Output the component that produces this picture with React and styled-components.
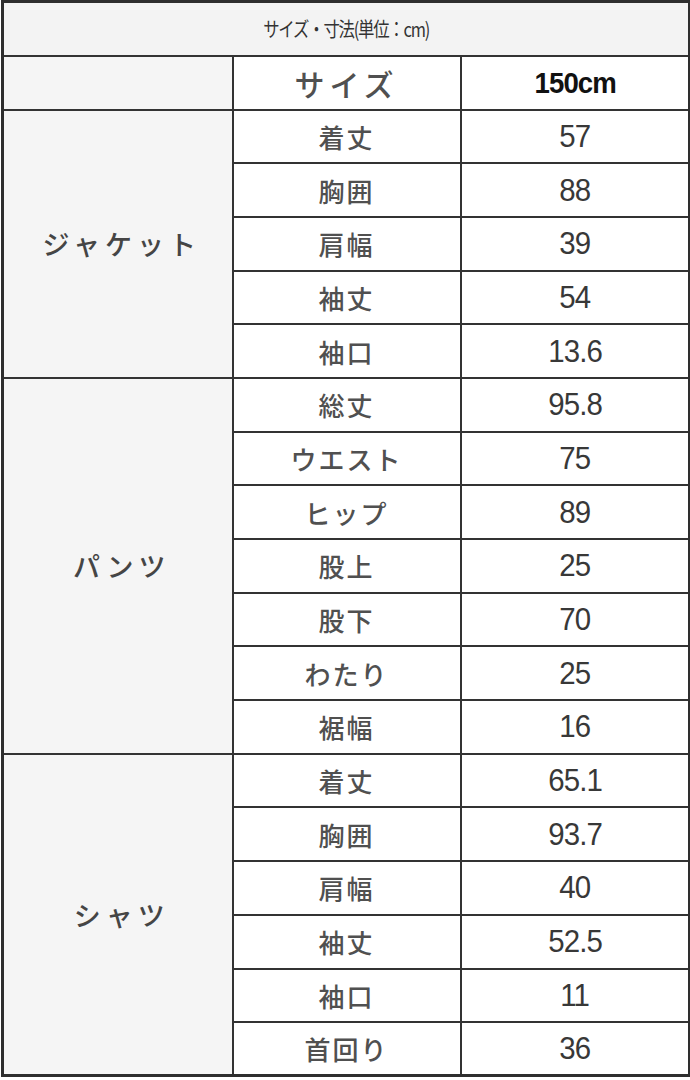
import React from 'react';
import styled, { createGlobalStyle } from 'styled-components';

const GlobalStyle = createGlobalStyle`
  html, body {
    margin: 0;
    padding: 0;
    background: #ffffff;
  }
  body {
    font-family: "Noto Sans CJK JP", "Noto Sans", sans-serif;
  }
`;

const LINE = '2.5px solid #333';

const Table = styled.table`
  width: 687px;
  margin-left: 1px;
  border-collapse: collapse;
  table-layout: fixed;
  border: 3px solid #2e2e2e;
`;

const TitleCell = styled.th`
  height: 51px;
  padding: 0;
  border: ${LINE};
  background: #f3f3f3;
  color: #333;
  font-family: "Noto Sans CJK JP", sans-serif;
  font-weight: 400;
  font-size: 20px;
  letter-spacing: -1.5px;
  text-align: center;
  span {
    display: inline-block;
    transform: scaleX(0.82);
  }
`;

const GroupCell = styled.td`
  padding: 0 0 0 8px;
  border: ${LINE};
  background: #f5f5f5;
  color: #454545;
  font-family: "Noto Sans CJK JP", sans-serif;
  font-weight: 500;
  font-size: 27px;
  letter-spacing: 5px;
  text-align: center;
  vertical-align: middle;
`;

const Row = styled.tr`
  height: ${({ $h }) => $h}px;
`;

const LabelCell = styled.td`
  padding: 0;
  border: ${LINE};
  background: #fff;
  color: #505050;
  font-family: "Noto Sans CJK JP", sans-serif;
  font-weight: 500;
  font-size: ${({ $head }) => ($head ? 30 : 26)}px;
  letter-spacing: ${({ $head }) => ($head ? 5 : 2)}px;
  text-align: center;
  vertical-align: middle;
`;

const ValueCell = styled.td`
  padding: 0;
  border: ${LINE};
  background: #fff;
  color: ${({ $head }) => ($head ? '#111' : '#383838')};
  font-family: "Liberation Sans", Arial, sans-serif;
  font-weight: ${({ $head }) => ($head ? 700 : 400)};
  font-size: ${({ $head }) => ($head ? 30 : 32)}px;
  letter-spacing: -1px;
  text-align: center;
  vertical-align: middle;
  span {
    display: inline-block;
    transform: scaleX(0.92);
  }
`;

const groups = [
  {
    name: 'ジャケット',
    rows: [
      ['着丈', '57'],
      ['胸囲', '88'],
      ['肩幅', '39'],
      ['袖丈', '54'],
      ['袖口', '13.6'],
    ],
  },
  {
    name: 'パンツ',
    rows: [
      ['総丈', '95.8'],
      ['ウエスト', '75'],
      ['ヒップ', '89'],
      ['股上', '25'],
      ['股下', '70'],
      ['わたり', '25'],
      ['裾幅', '16'],
    ],
  },
  {
    name: 'シャツ',
    rows: [
      ['着丈', '65.1'],
      ['胸囲', '93.7'],
      ['肩幅', '40'],
      ['袖丈', '52.5'],
      ['袖口', '11'],
      ['首回り', '36'],
    ],
  },
];

export default function App() {
  return (
    <>
      <GlobalStyle />
      <Table>
        <colgroup>
          <col style={{ width: 230 }} />
          <col style={{ width: 228 }} />
          <col style={{ width: 229 }} />
        </colgroup>
        <thead>
          <Row $h={54}>
            <TitleCell colSpan={3}>
              <span>サイズ・寸法(単位：cm)</span>
            </TitleCell>
          </Row>
          <Row $h={54}>
            <GroupCell />
            <LabelCell $head>サイズ</LabelCell>
            <ValueCell $head>
              <span>150cm</span>
            </ValueCell>
          </Row>
        </thead>
        <tbody>
          {groups.map((g) =>
            g.rows.map(([label, value], i) => (
              <Row key={g.name + label + i} $h={53.7}>
                {i === 0 && <GroupCell rowSpan={g.rows.length}>{g.name}</GroupCell>}
                <LabelCell>{label}</LabelCell>
                <ValueCell>
                  <span>{value}</span>
                </ValueCell>
              </Row>
            ))
          )}
        </tbody>
      </Table>
    </>
  );
}
